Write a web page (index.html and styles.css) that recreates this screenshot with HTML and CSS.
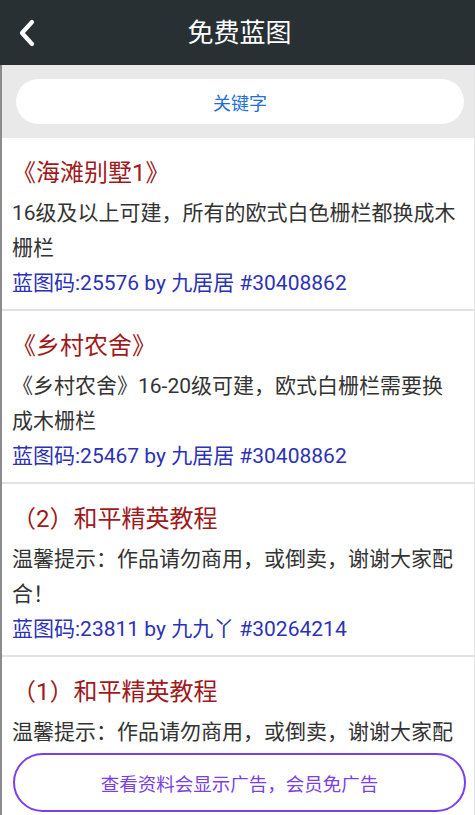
FILE: index.html
```html
<!DOCTYPE html>
<html lang="zh-CN">
<head>
<meta charset="utf-8">
<title>免费蓝图</title>
<link rel="stylesheet" href="styles.css">
</head>
<body>
<header class="topbar">
  <span class="back">
    <svg width="20" height="28" viewBox="0 0 20 28"><path d="M15 3 L5 14 L15 25" fill="none" stroke="#fff" stroke-width="4.2" stroke-linecap="round" stroke-linejoin="round"/></svg>
  </span>
  <h1 class="title">免费蓝图</h1>
</header>
<div class="frame">
  <main class="content">
    <div class="search">
      <div class="pill">关键字</div>
    </div>
    <ul class="list">
      <li class="item">
        <div class="item-title">《海滩别墅1》</div>
        <div class="item-desc">16级及以上可建，所有的欧式白色栅栏都换成木栅栏</div>
        <div class="item-meta">蓝图码:25576 by 九居居 #30408862</div>
      </li>
      <li class="item">
        <div class="item-title">《乡村农舍》</div>
        <div class="item-desc">《乡村农舍》16-20级可建，欧式白栅栏需要换成木栅栏</div>
        <div class="item-meta">蓝图码:25467 by 九居居 #30408862</div>
      </li>
      <li class="item">
        <div class="item-title">（2）和平精英教程</div>
        <div class="item-desc">温馨提示：作品请勿商用，或倒卖，谢谢大家配合！</div>
        <div class="item-meta">蓝图码:23811 by 九九丫 #30264214</div>
      </li>
      <li class="item">
        <div class="item-title">（1）和平精英教程</div>
        <div class="item-desc">温馨提示：作品请勿商用，或倒卖，谢谢大家配</div>
      </li>
    </ul>
  </main>
  <footer class="footer">
    <div class="ad-btn">查看资料会显示广告，会员免广告</div>
  </footer>
</div>
</body>
</html>
```
FILE: styles.css
```css
html, body {
  margin: 0;
  padding: 0;
  height: 100%;
  overflow: hidden;
}
body {
  font-family: "Roboto", "Noto Sans CJK SC", sans-serif;
  background: #fff;
  width: 475px;
  display: flex;
  flex-direction: column;
}
.topbar {
  height: 65px;
  flex: none;
  background: #283034;
  display: flex;
  align-items: center;
  justify-content: center;
  position: relative;
}
.back {
  position: absolute;
  left: 17px;
  top: 19px;
  display: flex;
}
.title {
  margin: 0;
  font-size: 26px;
  font-weight: normal;
  color: #fff;
  line-height: 1;
  padding-left: 4px;
}
.frame {
  flex: 1;
  display: flex;
  flex-direction: column;
  border-left: 2px solid #8c8c8c;
  border-right: 1px solid #e4e4e4;
  min-height: 0;
}
.content {
  flex: 1;
  overflow: hidden;
  min-height: 0;
}
.search {
  background: #e9e9e9;
  padding: 14px 10px 14px 14px;
}
.pill {
  height: 45px;
  background: #fff;
  border-radius: 23px;
  display: flex;
  align-items: center;
  justify-content: center;
  color: #1e6fd6;
  font-size: 18px;
}
.list {
  list-style: none;
  margin: 0;
  padding: 0;
}
.item {
  padding: 12px 14px 8px 10px;
  border-bottom: 2px solid #e2e2e2;
}
.item-title {
  font-size: 24px;
  line-height: 46px;
  color: #9e1a1c;
}
.item-desc {
  font-size: 21px;
  line-height: 35px;
  color: #333;
}
.item-meta {
  font-size: 21px;
  line-height: 35px;
  color: #2d31b6;
}
.footer {
  flex: none;
  height: 62px;
  box-sizing: border-box;
  padding: 0 8px 3px 11px;
}
.ad-btn {
  height: 59px;
  box-sizing: border-box;
  border: 2px solid #7c3ff0;
  border-radius: 30px;
  background: #fff;
  display: flex;
  align-items: center;
  justify-content: center;
  color: #7b3fe6;
  font-size: 18.5px;
}
```
